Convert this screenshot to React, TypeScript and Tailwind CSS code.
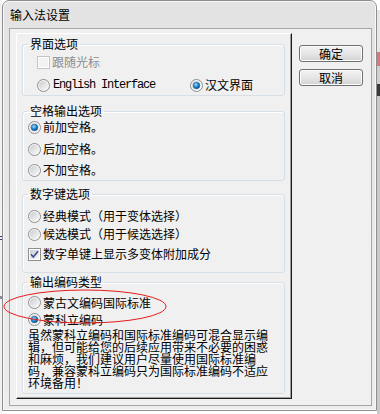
import React from 'react';

function Radio({ on }: { on?: boolean }) {
  return (
    <svg width="13" height="13" viewBox="0 0 13 13" className="shrink-0">
      <defs>
        <linearGradient id="rfill" x1="0" y1="0" x2="1" y2="1">
          <stop offset="0" stopColor="#c9cbcd" />
          <stop offset="1" stopColor="#fbfbfb" />
        </linearGradient>
        <radialGradient id="rdot" cx="0.4" cy="0.35" r="0.75">
          <stop offset="0" stopColor="#9fe0ff" />
          <stop offset="0.5" stopColor="#1e86d2" />
          <stop offset="1" stopColor="#0a3b73" />
        </radialGradient>
      </defs>
      <circle cx="6.5" cy="6.5" r="6" fill="#f7f7f7" stroke="#8b8d8f" />
      <circle cx="6.5" cy="6.5" r="4.6" fill="url(#rfill)" />
      {on && <circle cx="6.5" cy="6.5" r="3.3" fill="url(#rdot)" stroke="#194c80" strokeWidth="0.5" />}
    </svg>
  );
}

function Check({ on, disabled }: { on?: boolean; disabled?: boolean }) {
  return (
    <svg width="13" height="13" viewBox="0 0 13 13" className="shrink-0">
      <defs>
        <linearGradient id="cfill" x1="0" y1="0" x2="1" y2="1">
          <stop offset="0" stopColor="#cdd0d6" />
          <stop offset="1" stopColor="#f7f7f7" />
        </linearGradient>
      </defs>
      <rect x="0.5" y="0.5" width="12" height="12" fill="#fff" stroke={disabled ? '#c4c4c4' : '#8e8f8f'} />
      <rect x="2" y="2" width="9" height="9" fill={disabled ? '#f2f2f2' : 'url(#cfill)'} />
      {on && <path d="M3 6.3 L5.3 9 L10 3.2" stroke="#3f4f93" strokeWidth="1.7" fill="none" />}
    </svg>
  );
}

function Row({ children, label, className = '' }: { children: React.ReactNode; label: string; className?: string }) {
  return (
    <div className={`flex items-center ${className}`}>
      {children}
      <span className="ml-[2px] leading-[14px] whitespace-nowrap">{label}</span>
    </div>
  );
}

function Group({ title, className = '', children }: { title: string; className?: string; children: React.ReactNode }) {
  return (
    <fieldset className={`border border-[#d5dfe5] rounded-[3px] px-[5px] shadow-[inset_1px_1px_0_#ffffff] ${className}`}>
      <legend className="px-[2px] text-[12px] leading-[12px]">{title}</legend>
      {children}
    </fieldset>
  );
}

function Button({ label }: { label: string }) {
  return (
    <div className="w-[64px] h-[17px] rounded-[3px] border border-[#707070] bg-gradient-to-b from-[#f3f3f3] via-[#e6e6e6] to-[#d2d2d2] shadow-[inset_0_0_0_1px_#fbfbfb] flex items-center justify-center leading-[14px]">
      {label}
    </div>
  );
}

export default function App() {
  return (
    <div className="relative w-[380px] h-[414px] bg-white flex overflow-hidden font-['Noto_Sans_CJK_SC',sans-serif] text-[12px] text-black">
      {/* desktop, left */}
      <div className="w-[2px] flex flex-col">
        <div className="h-[236px] bg-[#f2f2f2]" />
        <div className="h-[1px] bg-[#3c3c70]" />
        <div className="h-[2px] bg-[#f2f2f2]" />
        <div className="h-[1px] bg-[#3c3c70]" />
        <div className="h-[56px] bg-[#f2f2f2]" />
        <div className="h-[3px] bg-[#8a8aa0]" />
        <div className="flex-1 bg-[#f2f2f2]" />
      </div>

      {/* dialog window */}
      <div className="w-[375px] h-[411px] flex flex-col rounded-t-[7px] border border-[#8e8e8e] bg-gradient-to-b from-[#e3e3e3] to-[#ededed] shadow-[inset_0_0_0_1px_#f8f8f8]">
        <div className="h-[27px] flex items-center pl-[7px] pt-[1px] text-[12px]">输入法设置</div>

        <div className="flex-1 ml-[6px] mr-[4px] mb-[4px] border border-[#a6a6a6] bg-[#f0f0f0] flex items-start">
          {/* property page */}
          <div className="w-[276px] h-[366px] ml-[6px] mt-[4px] border-l border-t border-[#ffffff] border-r border-b border-r-[#1a1a1a] border-b-[#1a1a1a] shadow-[inset_-1px_-1px_0_#a0a0a0] pl-[5px] pr-[6px] pt-[4px] flex flex-col">
            <Group title="界面选项">
              <div className="pl-[9px] pt-[3px] pb-[1px] flex flex-col gap-[5px]">
                <Row label="跟随光标" className="h-[18px] text-[#8d8d8d]">
                  <Check disabled />
                </Row>
                <div className="h-[18px] flex items-center">
                  <div className="w-[153px] flex items-center">
                    <Radio />
                    <span className="ml-[3px] font-['Liberation_Mono',monospace] text-[12px] tracking-[-1.2px] leading-[14px] whitespace-nowrap">English Interface</span>
                  </div>
                  <Row label="汉文界面">
                    <Radio on />
                  </Row>
                </div>
              </div>
            </Group>

            <Group title="空格输出选项" className="mt-[9px]">
              <div className="pt-[1px] pb-[1px] flex flex-col">
                <Row label="前加空格。" className="h-[18px]">
                  <Radio on />
                </Row>
                <Row label="后加空格。" className="h-[18px] mt-[4px]">
                  <Radio />
                </Row>
                <Row label="不加空格。" className="h-[18px] mt-[3px]">
                  <Radio />
                </Row>
              </div>
            </Group>

            <Group title="数字键选项" className="mt-[7px]">
              <div className="pt-[7px] pb-[9px] flex flex-col">
                <Row label="经典模式（用于变体选择）" className="h-[18px]">
                  <Radio />
                </Row>
                <Row label="候选模式（用于候选选择）" className="h-[18px]">
                  <Radio />
                </Row>
                <Row label="数字单键上显示多变体附加成分" className="h-[18px] mt-[2px]">
                  <Check on />
                </Row>
              </div>
            </Group>

            <Group title="输出编码类型" className="mt-[3px]">
              <div className="pt-[6px] pb-[4px] flex flex-col">
                <Row label="蒙古文编码国际标准" className="h-[17px]">
                  <Radio />
                </Row>
                <Row label="蒙科立编码" className="h-[17px]">
                  <Radio on />
                </Row>
                <div className="mt-[1px] leading-[12px] whitespace-nowrap">
                  <div>虽然蒙科立编码和国际标准编码可混合显示编</div>
                  <div>辑，但可能给您的后续应用带来不必要的困惑</div>
                  <div>和麻烦，我们建议用户尽量使用国际标准编</div>
                  <div>码，兼容蒙科立编码只为国际标准编码不适应</div>
                  <div>环境备用！</div>
                </div>
              </div>
            </Group>
          </div>

          {/* buttons */}
          <div className="ml-[7px] mt-[16px] flex flex-col gap-[7px]">
            <Button label="确定" />
            <Button label="取消" />
          </div>
        </div>
      </div>

      {/* desktop, right */}
      <div className="w-[3px] flex flex-col">
        <div className="h-[10px] bg-white" />
        <div className="h-[42px] bg-[#e6e6e6]" />
        <div className="h-[14px] bg-[#d9777a]" />
        <div className="h-[18px] bg-[#cfcfcf]" />
        <div className="h-[12px] bg-[#3a3a3a]" />
        <div className="flex-1 bg-[#c8c8c8]" />
      </div>

      {/* red annotation ellipse */}
      <svg className="absolute left-[3px] top-[289px]" width="164" height="35" viewBox="0 0 164 35">
        <ellipse cx="82" cy="17.5" rx="81" ry="16.5" fill="none" stroke="#e41b1b" strokeWidth="1" />
      </svg>
    </div>
  );
}
